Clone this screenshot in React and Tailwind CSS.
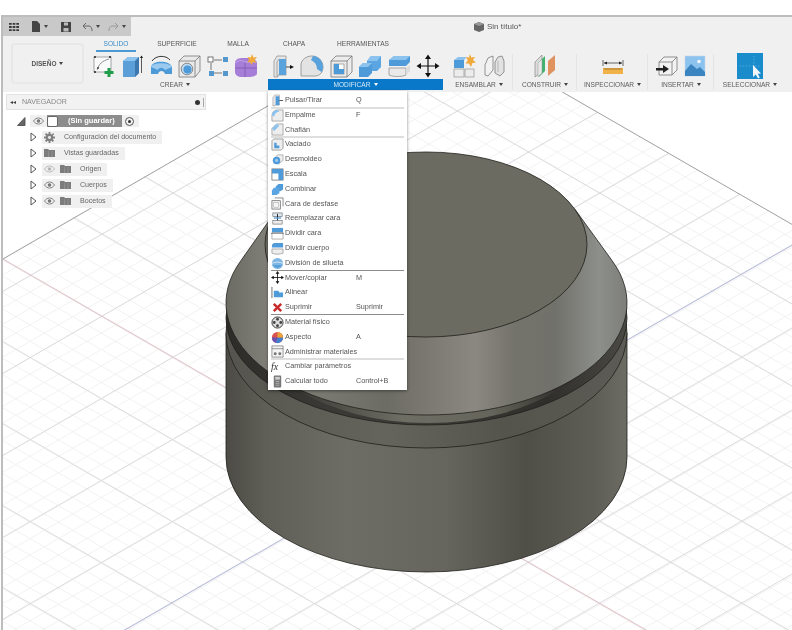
import React from 'react';

const majorC = [11, 93, 175, 340, 422, 504, 586, 668, 750, 832, -71, -153];
const majorD = [293, 375, 457, 539, 621, 785, 867, 949, 1031, 1113];

function gridLines() {
  var minor = [];
  for (var i = -16; i < 70; i++) minor.push(i);
  return minor;
}

// line of slope +0.577 with offset c, across the whole picture
function Up(props) {
  return <line x1={0} y1={props.c} x2={800} y2={props.c + 461.6} stroke={props.stroke} strokeWidth={props.w} />;
}
// line of slope -0.577 with offset d
function Down(props) {
  return <line x1={0} y1={props.d} x2={800} y2={props.d - 461.6} stroke={props.stroke} strokeWidth={props.w} />;
}

function Viewport() {
  return (
    <svg className="absolute inset-0" width="789" height="538" viewBox="3 92 789 538">
      <defs>
        <clipPath id="plane">
          <polygon points="427,14 1000,345 1000,800 -100,800 -100,317" />
        </clipPath>
        <linearGradient id="cyl" gradientUnits="userSpaceOnUse" x1="226" x2="627" y1="0" y2="0">
          <stop offset="0" stopColor="#4c4b45" />
          <stop offset="0.1" stopColor="#5f5e57" />
          <stop offset="0.3" stopColor="#6d6d65" />
          <stop offset="0.55" stopColor="#65645d" />
          <stop offset="0.75" stopColor="#4f4e47" />
          <stop offset="0.92" stopColor="#5e5d56" />
          <stop offset="1" stopColor="#6c6b64" />
        </linearGradient>
        <linearGradient id="cone" gradientUnits="userSpaceOnUse" x1="226" x2="627" y1="0" y2="0">
          <stop offset="0" stopColor="#6c6b63" />
          <stop offset="0.12" stopColor="#84837b" />
          <stop offset="0.4" stopColor="#6d6c64" />
          <stop offset="0.62" stopColor="#8a8880" />
          <stop offset="0.72" stopColor="#74736b" />
          <stop offset="0.82" stopColor="#71716b" />
          <stop offset="0.93" stopColor="#8d8f8a" />
          <stop offset="1" stopColor="#7d7e79" />
        </linearGradient>
        <linearGradient id="groove" gradientUnits="userSpaceOnUse" x1="226" x2="627" y1="0" y2="0">
          <stop offset="0" stopColor="#2d2c29" />
          <stop offset="0.25" stopColor="#3a3935" />
          <stop offset="0.5" stopColor="#3d3c37" />
          <stop offset="0.8" stopColor="#2f2e2a" />
          <stop offset="1" stopColor="#4a4944" />
        </linearGradient>
        <linearGradient id="neck" gradientUnits="userSpaceOnUse" x1="300" x2="556" y1="0" y2="0">
          <stop offset="0" stopColor="#3b3a35" />
          <stop offset="0.4" stopColor="#6f6e65" />
          <stop offset="0.75" stopColor="#66655b" />
          <stop offset="1" stopColor="#33322e" />
        </linearGradient>
        <linearGradient id="ledge" gradientUnits="userSpaceOnUse" x1="226" x2="627" y1="0" y2="0">
          <stop offset="0" stopColor="#55544e" />
          <stop offset="0.4" stopColor="#65645c" />
          <stop offset="0.7" stopColor="#54534c" />
          <stop offset="1" stopColor="#5c5b55" />
        </linearGradient>
      </defs>

      <g clipPath="url(#plane)">
        {gridLines().map(function (i) {
          return <Up key={'u' + i} c={-235 + i * 16.44} stroke="#efefef" w={0.8} />;
        })}
        {gridLines().map(function (i) {
          return <Down key={'d' + i} d={260 + i * 16.44} stroke="#efefef" w={0.8} />;
        })}
        {majorC.map(function (c) {
          return <Up key={c} c={c} stroke="#dddbde" w={1} />;
        })}
        {majorD.map(function (d) {
          return <Down key={d} d={d} stroke="#dddbde" w={1} />;
        })}
        <Up c={257.3} stroke="#e0c6ca" w={1.1} />
        <Down d={702} stroke="#b9bdd9" w={1.1} />
      </g>
      <line x1="3" y1="259" x2="427" y2="14" stroke="#a0a0a0" strokeWidth="1" />
      <line x1="427" y1="14" x2="800" y2="229" stroke="#a0a0a0" strokeWidth="1" />

      {/* cylinder */}
      <path d="M226 333 L226 457 A200.5 115 0 0 0 627 457 L627 333 Z" fill="url(#cyl)" stroke="#1f1f1c" strokeWidth="0.8" />
      <ellipse cx="426.5" cy="333" rx="200.5" ry="115" fill="url(#ledge)" stroke="#1f1f1c" strokeWidth="0.8" />
      <ellipse cx="426.5" cy="318" rx="200.5" ry="107" fill="url(#groove)" stroke="#1f1f1c" strokeWidth="0.8" />
      <ellipse cx="428" cy="300" rx="192" ry="123" fill="url(#neck)" />

      {/* cone and top */}
      <path d="M241 260.500 L277 209.400 L575 209.400 L612 260.500 A200.500 112 0 1 1 241 260.500 Z" fill="url(#cone)" stroke="#1f1f1c" strokeWidth="0.8" />
      <ellipse cx="426" cy="244.500" rx="161" ry="92.500" fill="#6c6b61" stroke="#1f1f1c" strokeWidth="0.8" />
    </svg>
  );
}

function Ico(props) {
  return (
    <svg width={props.w || 24} height={props.h || 24} viewBox={props.box || '0 0 24 24'} className="shrink-0">
      {props.children}
    </svg>
  );
}

const toolIcons = {
  sketch: (
    <Ico>
      <rect x="2" y="3" width="17" height="15" fill="#fafafa" stroke="#8a8f94" strokeWidth="0.8" />
      <path d="M5 16 C7 10 10 7 17 5" fill="none" stroke="#777" strokeWidth="0.8" />
      <path d="M2 3h2M17 3h2M2 18h2" stroke="#222" strokeWidth="1.4" />
      <circle cx="6" cy="14" r="0.9" fill="#333" />
      <path d="M17 14v9M12.500 18.500h9" stroke="#1f9d4a" strokeWidth="3" />
    </Ico>
  ),
  box: (
    <Ico>
      <path d="M3 7 L8 3 H19 V19 L15 23 H3 Z" fill="#5aa5e2" />
      <path d="M3 7 L8 3 H19 L15 7 Z" fill="#8cc2ee" />
      <path d="M15 7 H3 V23 H15 Z" fill="#5c9fd8" />
      <path d="M15 7 L19 3 V19 L15 23 Z" fill="#3c77ad" />
      <path d="M21.5 3 V19" stroke="#333" strokeWidth="0.8" />
      <path d="M20 4 L21.5 1.5 L23 4 Z" fill="#111" />
    </Ico>
  ),
  sweep: (
    <Ico>
      <path d="M2 13 C3 6 21 6 23 13 L23 20 H16 C15 16 10 16 9 20 L2 20 Z" fill="#4d9ad9" />
      <path d="M2 13 C3 8 21 8 23 13 L16 16 C14 13 10 13 9 16 Z" fill="#9cc9ee" />
      <path d="M3 7 C7 1 17 1 21 6" fill="none" stroke="#222" strokeWidth="0.9" />
    </Ico>
  ),
  hole: (
    <Ico>
      <path d="M2 7 L7 2 H23 V17 L18 23 H2 Z" fill="#e9e9e9" stroke="#777" strokeWidth="0.8" />
      <path d="M2 7 H18 V23 M18 7 L23 2" fill="none" stroke="#777" strokeWidth="0.8" />
      <circle cx="10" cy="15" r="5.8" fill="#bcd8ee" stroke="#777" strokeWidth="0.8" />
      <circle cx="10.5" cy="15.5" r="4" fill="#4d9ad9" />
    </Ico>
  ),
  pattern: (
    <Ico>
      <path d="M8 6 H16 M5 9 V16 M8 19 H16" stroke="#555" strokeWidth="0.8" />
      <rect x="2" y="3" width="5" height="5" fill="#fff" stroke="#555" strokeWidth="0.8" />
      <rect x="17" y="3" width="5" height="5" fill="#5497cc" />
      <rect x="3" y="17" width="5" height="5" fill="#5497cc" />
      <rect x="17" y="17" width="5" height="5" fill="#5497cc" />
    </Ico>
  ),
  purple: (
    <Ico>
      <path d="M1 9 C1 5 5 4 9 4 H17 C20 4 23 7 23 9 V19 C23 22 18 23 15 23 H8 C4 23 1 21 1 18 Z" fill="#a67ed8" />
      <path d="M11 8 V23 M1 14 H23" stroke="#7d55b5" strokeWidth="0.8" />
      <path d="M1 9 C5 6 8 6 11 8 L23 8" fill="none" stroke="#c4a4e8" strokeWidth="1" />
      <path d="M18 0 L19.3 3.5 L23 3 L20.6 6 L22.5 9 L19 8 L17.5 11 L16 8 L13 8.5 L15 6 L13.5 3 L16.8 3.5 Z" fill="#f0a93a" />
    </Ico>
  ),
  press: (
    <Ico>
      <path d="M3 7 L6 2 H15 V21 H7 V23 H3 Z" fill="#e5e5e5" stroke="#8a8a8a" strokeWidth="0.7" />
      <path d="M8 5 H15 V21 H8 Z" fill="#5aa2dc" />
      <path d="M8 5 L6 8 V22" fill="none" stroke="#8a8a8a" strokeWidth="0.7" />
      <path d="M15 13 H20" stroke="#333" strokeWidth="0.9" />
      <path d="M19 11 L23 13 L19 15 Z" fill="#111" />
    </Ico>
  ),
  fillet: (
    <Ico>
      <path d="M1 22 V11 C1 6 6 2 12 2 C18 2 23 7 23 13 C23 18 20 22 15 22 Z" fill="#e3e3e3" stroke="#8a8a8a" strokeWidth="0.8" />
      <path d="M13 2 C19 2 23 7 23 13 C23 15 22.500 17 21.500 18 L17 15 C17 11 15 8 11 6 Z" fill="#5aa2dc" />
    </Ico>
  ),
  shell: (
    <Ico>
      <path d="M2 7 L7 2 H23 V18 L18 23 H2 Z" fill="#ececec" stroke="#777" strokeWidth="0.8" />
      <path d="M2 7 H18 V23 M18 7 L23 2" fill="none" stroke="#777" strokeWidth="0.8" />
      <rect x="5" y="10" width="10" height="10" fill="#fff" stroke="#777" strokeWidth="0.6" />
      <path d="M5 10 H10 V15 H15 V20 H5 Z" fill="#4d9ad9" />
    </Ico>
  ),
  combine: (
    <Ico>
      <path d="M9 7 L13 2 H23 V13 L19 17 H9 Z" fill="#5aa5e2" />
      <path d="M9 7 L13 2 H23 L19 7 Z" fill="#8cc2ee" />
      <path d="M1 13 L5 9 H14 V19 L10 23 H1 Z" fill="#4f9ad8" />
      <path d="M1 13 L5 9 H14 L10 13 Z" fill="#8cc2ee" />
    </Ico>
  ),
  split: (
    <Ico>
      <path d="M2 14 H19 V21 C15 23 6 23 2 21 Z" fill="#e9e9e9" stroke="#888" strokeWidth="0.7" />
      <path d="M2 6 L7 2 H23 V8 L19 12 H2 Z" fill="#4f9ad8" />
      <path d="M2 6 L7 2 H23 L19 6 Z" fill="#8cc2ee" />
      <path d="M19 14 L23 11 V17 L19 21 Z" fill="#dcdcdc" />
    </Ico>
  ),
  move: (
    <Ico>
      <path d="M12 4 V20 M4 12 H20" stroke="#111" strokeWidth="1.2" />
      <path d="M12 0.5 L15 5 H9 Z M12 23.5 L15 19 H9 Z M0.5 12 L5 9 V15 Z M23.5 12 L19 9 V15 Z" fill="#111" />
    </Ico>
  ),
  assemble: (
    <Ico>
      <rect x="1" y="6" width="10" height="8" fill="#4f9ad8" />
      <path d="M1 6 L5 3 H14 L11 6 Z" fill="#8cc2ee" />
      <rect x="1" y="15" width="10" height="8" fill="#ececec" stroke="#888" strokeWidth="0.6" />
      <rect x="12" y="15" width="9" height="8" fill="#ececec" stroke="#888" strokeWidth="0.6" />
      <path d="M17 0 L18.3 3.5 L22 3 L20 6 L23 8.5 L19.5 9 L18 13 L16 9.5 L12.5 9.5 L14.8 6.5 L13 3 L16 3.5 Z" fill="#f0a93a" />
    </Ico>
  ),
  joint: (
    <Ico>
      <path d="M3 21 V11 L6 4 L11 2 V16 L6 22 Z" fill="#f2f2f2" stroke="#888" strokeWidth="0.9" />
      <path d="M13 19 V8 L16 3 L20 2 L22 7 V18 L18 22 Z" fill="#e2e2e2" stroke="#888" strokeWidth="0.9" />
      <path d="M16 7 V18" stroke="#aaa" strokeWidth="0.8" />
    </Ico>
  ),
  construct: (
    <Ico>
      <path d="M2 8 L9 1 V17 L2 23 Z" fill="#dcdcdc" stroke="#888" strokeWidth="0.7" />
      <path d="M6 8 L12 2 V17 L6 23 Z" fill="#3fb36b" />
      <path d="M5 9 L9 5 V19 L5 23 Z" fill="#e8e8e8" stroke="#999" strokeWidth="0.5" />
      <path d="M15 7 L22 1 V16 L15 22 Z" fill="#e0935f" />
    </Ico>
  ),
  inspect: (
    <Ico>
      <path d="M2 6 V12 M22 6 V12 M3 9 H21" stroke="#555" strokeWidth="0.9" />
      <path d="M3 9 L6 7.5 V10.5 Z M21 9 L18 7.5 V10.5 Z" fill="#222" />
      <rect x="2" y="14" width="20" height="6" fill="#f1b24a" />
      <path d="M4 14v2M6 14v2M8 14v2M10 14v2M12 14v2M14 14v2M16 14v2M18 14v2M20 14v2" stroke="#7a5a20" strokeWidth="0.6" />
    </Ico>
  ),
  insert: (
    <Ico>
      <path d="M4 8 L9 3 H22 V16 L17 21 H4 Z" fill="#f2f2f2" stroke="#777" strokeWidth="0.8" />
      <path d="M4 8 H17 V21 M17 8 L22 3" fill="none" stroke="#777" strokeWidth="0.8" />
      <path d="M1 14 H8 V11 L14 15 L8 19 V16.5 H1 Z" fill="#222" />
    </Ico>
  ),
  image: (
    <Ico>
      <rect x="2" y="2" width="20" height="20" fill="#8cc2ee" stroke="#c8d8e4" strokeWidth="0.6" />
      <circle cx="16" cy="7.5" r="1.8" fill="#f4f8fb" />
      <path d="M2 22 V17 L8 10 L14 15 L17 13 L22 18 V22 Z" fill="#3a84c0" />
    </Ico>
  ),
  select: (
    <svg width="26" height="26" viewBox="0 0 26 26" className="shrink-0">
      <rect width="26" height="26" fill="#1a8ccc" />
      <path d="M3 13 H23 M17 3 V23" stroke="#6dbde8" strokeWidth="0.6" strokeDasharray="1.5 1.5" />
      <path d="M16 12 V24 L18.8 21.5 L21 25.5 L22.8 24.6 L20.8 20.8 L24 20.4 Z" fill="#f2f6fa" />
    </svg>
  ),
};

const groups = [
  { label: 'ENSAMBLAR', w: 'w-[70px] pl-[2px]', icons: ['assemble', 'joint'], iw: 'w-[29px]', line: true },
  { label: 'CONSTRUIR', w: 'w-[64px]', icons: ['construct'], iw: 'w-[30px]', line: true },
  { label: 'INSPECCIONAR', w: 'w-[71px]', icons: ['inspect'], iw: 'w-[30px]', line: true },
  { label: 'INSERTAR', w: 'w-[66px]', icons: ['insert', 'image'], iw: 'w-[28px]', line: true },
  { label: 'SELECCIONAR', w: 'w-[75px] pr-[3px]', icons: ['select'], iw: 'w-[30px]', line: false },
];

function Caret(props) {
  return <span className={'ml-[3px] inline-block border-x-[2px] border-t-[3px] border-x-transparent align-middle ' + (props.white ? 'border-t-white' : 'border-t-[#444]')} />;
}

function Grp(props) {
  return (
    <div className={'flex flex-col ' + props.className}>
      <div className="flex h-[27px] items-center justify-center">
        {props.icons.map(function (name) {
          return (
            <div key={name} className={'flex justify-center ' + props.iw}>
              {toolIcons[name]}
            </div>
          );
        })}
      </div>
      <div className={'flex h-[11px] items-center justify-center text-[6.6px] ' + (props.active ? 'bg-[#0a78c8] text-[#d5e8f6]' : 'text-[#5a5a5a]')}>
        {props.label}
        <Caret white={props.active} />
      </div>
    </div>
  );
}

function Toolbar() {
  return (
    <div className="h-[75px] bg-[#f0f0f0]">
      <div className="flex h-[19px]">
        <div className="flex w-[128px] items-center bg-[#c9c9c9] pl-[6px]">
          <svg width="10" height="10" viewBox="0 0 11 11" className="shrink-0">
            <path d="M0 1h3v2H0zM4 1h3v2H4zM8 1h3v2H8zM0 4.500h3v2H0zM4 4.500h3v2H4zM8 4.500h3v2H8zM0 8h3v2H0zM4 8h3v2H4zM8 8h3v2H8z" fill="#3a3a3a" />
          </svg>
          <svg width="10" height="11" viewBox="0 0 10 11" className="ml-[12px] shrink-0">
            <path d="M1 0h5l3 3v8H1z" fill="#444" />
          </svg>
          <Caret />
          <svg width="10" height="10" viewBox="0 0 10 10" className="ml-[13px] shrink-0">
            <path d="M0 0h10v10H0z" fill="#444" />
            <path d="M3 0.500h4v3H3zM2.500 6h5v3.500h-5z" fill="#bbb" />
          </svg>
          <svg width="11" height="10" viewBox="0 0 11 10" className="ml-[11px] shrink-0">
            <path d="M4 1 L1 4 L4 7 M1 4 H7 C9 4 10 6 10 9" fill="none" stroke="#666" strokeWidth="1" />
          </svg>
          <Caret />
          <svg width="11" height="10" viewBox="0 0 11 10" className="ml-[8px] shrink-0">
            <path d="M7 1 L10 4 L7 7 M10 4 H4 C2 4 1 6 1 9" fill="none" stroke="#9a9a9a" strokeWidth="1" />
          </svg>
          <Caret />
        </div>
        <div className="flex flex-1 items-center pl-[343px] text-[8px] text-[#555]">
          <svg width="10" height="10" viewBox="0 0 10 10" className="mr-[3px] shrink-0">
            <path d="M0 2 L5 0 L10 2 L10 8 L5 10 L0 8 Z" fill="#666" />
            <path d="M0 2 L5 4 L10 2 L5 0 Z" fill="#999" />
          </svg>
          Sin título*
        </div>
      </div>
      <div className="flex pl-[8px]">
        <div className="mt-[7px] flex h-[41px] w-[73px] items-center justify-center rounded-[4px] border-2 border-[#e8e8e8] text-[6.5px] font-bold text-[#555]">
          DISEÑO
          <Caret />
        </div>
        <div className="ml-[5px] flex flex-col">
          <div className="flex h-[16px] items-center pl-[7px] text-center text-[6.6px] text-[#555]">
            <div className="h-[16px] w-[40px] border-b-2 border-[#4a9ad4] pt-[3px] text-[#3a8cc8]">SOLIDO</div>
            <div className="w-[82px]">SUPERFICIE</div>
            <div className="w-[40px]">MALLA</div>
            <div className="w-[72px]">CHAPA</div>
            <div className="w-[66px]">HERRAMIENTAS</div>
          </div>
          <div className="flex">
            <Grp label="CREAR" className="w-[172px]" iw="w-[28.6px]" icons={['sketch', 'box', 'sweep', 'hole', 'pattern', 'purple']} />
            <Grp label="MODIFICAR" active className="ml-[7px] w-[175px]" iw="w-[29.2px]" icons={['press', 'fillet', 'shell', 'combine', 'split', 'move']} />
            {groups.map(function (g) {
              return (
                <div key={g.label} className={'relative ' + g.w}>
                  <Grp label={g.label} icons={g.icons} iw={g.iw} />
                  {g.line && <div className="absolute right-0 top-[2px] h-[36px] w-px bg-[#e4e4e4]" />}
                </div>
              );
            })}
          </div>
        </div>
      </div>
    </div>
  );
}

function Arrow() {
  return (
    <svg width="7" height="10" viewBox="0 0 7 10" className="shrink-0">
      <path d="M1 1 L6 5 L1 9 Z" fill="#fff" stroke="#444" strokeWidth="0.9" />
    </svg>
  );
}

function Eye(props) {
  var c = props.dim ? '#b5b5b5' : '#777';
  return (
    <svg width="11" height="8" viewBox="0 0 11 8" className="shrink-0">
      <path d="M0.500 4 C3 0 8 0 10.500 4 C8 8 3 8 0.500 4 Z" fill="none" stroke={c} strokeWidth="0.9" />
      <circle cx="5.500" cy="4" r="1.800" fill={c} />
    </svg>
  );
}

function Folder() {
  return (
    <svg width="11" height="8" viewBox="0 0 11 8" className="shrink-0">
      <path d="M0 0h4l1 1h6v7H0z" fill="#7c7c7c" />
      <path d="M4.500 2v6M8 2v6" stroke="#a5a5a5" strokeWidth="0.5" />
    </svg>
  );
}

function Gear() {
  return (
    <svg width="11" height="11" viewBox="0 0 12 12" className="shrink-0">
      <path d="M5 0h2v2l1.500.6L10 1.200 11 2.500 9.600 4 10 5h2v2h-2l-.4 1L11 9.500 9.500 11 8 9.600 7 10v2H5v-2l-1-.4L2.500 11 1 9.500 2.400 8 2 7H0V5h2l.4-1L1 2.500 2.500 1 4 2.400 5 2z" fill="#808080" />
      <circle cx="6" cy="6" r="1.600" fill="#f0f0f0" />
    </svg>
  );
}

function Navigator() {
  return (
    <div className="absolute left-[3px] top-[2px] w-[200px] text-[7.1px] text-[#666]">
      <div className="flex h-[16px] items-center border border-[#e2e2e2] bg-[#f2f2f2] pl-[3px]">
        <span className="text-[6px] leading-none text-[#444]">◂◂</span>
        <span className="ml-[6px] flex-1 text-[#888]">NAVEGADOR</span>
        <span className="mr-[3px] h-[5px] w-[5px] rounded-full bg-[#333]" />
        <span className="mr-[1px] h-[9px] w-px bg-[#aaa]" />
      </div>
      <div className="ml-[11px] mt-[3px] flex h-[16px] items-center">
        <svg width="9" height="9" viewBox="0 0 9 9" className="shrink-0">
          <path d="M8 0.500 V8.500 H0.500 Z" fill="#666" stroke="#444" strokeWidth="0.8" />
        </svg>
        <div className="ml-[4px] flex h-[12px] items-center bg-[#f0f0f0] pl-[3px] pr-[5px]">
          <Eye />
          <div className="ml-[3px] flex h-[12px] w-[75px] items-center bg-[#8d8d8d] text-[7.5px] font-bold text-white">
            <span className="h-[11px] w-[11px] rounded-[2px] border border-[#666] bg-white" />
            <span className="ml-[10px]">(Sin guardar)</span>
          </div>
          <span className="ml-[3px] flex h-[9px] w-[9px] items-center justify-center rounded-full border border-[#555]">
            <span className="h-[3px] w-[3px] rounded-full bg-[#333]" />
          </span>
        </div>
      </div>
      {[
        { t: 'Configuración del documento', gear: true },
        { t: 'Vistas guardadas' },
        { t: 'Origen', eye: true, dim: true },
        { t: 'Cuerpos', eye: true },
        { t: 'Bocetos', eye: true },
      ].map(function (r) {
        return (
          <div key={r.t} className="ml-[24px] flex h-[16px] items-center">
            <Arrow />
            <div className="ml-[5px] flex h-[13px] items-center bg-[#f0f0f0] pl-[2px] pr-[6px]">
              {r.eye && <div className="mr-[5px]"><Eye dim={r.dim} /></div>}
              {r.gear ? <Gear /> : <Folder />}
              <span className="ml-[9px]">{r.t}</span>
            </div>
          </div>
        );
      })}
    </div>
  );
}

function M(props) {
  return (
    <svg width="13" height="13" viewBox="0 0 14 14" className="shrink-0">
      {props.children}
    </svg>
  );
}

const blue = '#4f9ad8';
const menu = [
  { t: 'Pulsar/Tirar', k: 'Q', sep: 'light', i: <M><path d="M2 4 L4 1 H9 V12 H4 V13 H2 Z" fill="#e5e5e5" stroke="#888" strokeWidth="0.5" /><path d="M5 2.500 H9 V12 H5 Z" fill={blue} /><path d="M9 7 H13" stroke="#222" strokeWidth="0.8" /></M> },
  { t: 'Empalme', k: 'F', i: <M><path d="M1 13 V7 C1 3 4 1 7 1 H13 V13 Z" fill="#eee" stroke="#888" strokeWidth="0.7" /><path d="M1 7 C1 3 4 1 7 1 L9 3 C6 3 4 5 3.500 8 Z" fill="#8cc2ee" /></M> },
  { t: 'Chaflán', sep: 'light', i: <M><path d="M1 13 V6 L6 1 H13 V13 Z" fill="#eee" stroke="#888" strokeWidth="0.7" /><path d="M1 6 L6 1 L9 3 L3.500 8.500 Z" fill="#8cc2ee" /></M> },
  { t: 'Vaciado', i: <M><path d="M1 3 L3 1 H13 V11 L11 13 H1 Z" fill="#eee" stroke="#777" strokeWidth="0.7" /><path d="M3.500 5 H6 V8 H9 V11 H3.500 Z" fill={blue} /></M> },
  { t: 'Desmoldeo', i: <M><path d="M2 8 L7 2 H13 V8 L8 12 Z" fill="#eee" stroke="#888" strokeWidth="0.6" /><circle cx="6" cy="8" r="4" fill={blue} /><circle cx="6" cy="8" r="1.800" fill="#9cc9ee" /></M> },
  { t: 'Escala', i: <M><rect x="1" y="1" width="12" height="12" fill="#fff" stroke="#555" strokeWidth="0.7" /><path d="M1 1 H13 V13 H8 V6 H1 Z" fill={blue} /></M> },
  { t: 'Combinar', i: <M><path d="M5 4 L8 1 H13 V7 L10 9 H5 Z" fill={blue} /><path d="M1 8 L3 5 H9 V11 L6 13 H1 Z" fill="#5aa5e2" /></M> },
  { t: 'Cara de desfase', i: <M><rect x="1" y="4" width="9" height="9" fill="#f4f4f4" stroke="#555" strokeWidth="0.7" /><path d="M4 1 H13 V10" fill="none" stroke="#555" strokeWidth="0.7" /><rect x="3" y="6" width="5" height="5" fill="none" stroke="#999" strokeWidth="0.5" /></M> },
  { t: 'Reemplazar cara', i: <M><rect x="2" y="1" width="10" height="4" fill="#dfe7ee" stroke="#555" strokeWidth="0.6" /><rect x="2" y="9" width="10" height="4" fill="#eee" stroke="#555" strokeWidth="0.6" /><path d="M7 2 V9" stroke="#222" strokeWidth="1" /><path d="M3 6.500 H11" stroke={blue} strokeWidth="1.400" /></M> },
  { t: 'Dividir cara', i: <M><path d="M1 1 H13 V6 H1 Z" fill={blue} /><path d="M1 6 H13 V13 H1 Z" fill="#fff" stroke="#777" strokeWidth="0.6" /><path d="M0 7 H14" stroke="#555" strokeWidth="0.6" /></M> },
  { t: 'Dividir cuerpo', i: <M><path d="M1 3 L3 1 H13 V6 H1 Z" fill={blue} /><path d="M1 7.500 H13 V12 C10 13.500 4 13.500 1 12 Z" fill="#eee" stroke="#777" strokeWidth="0.6" /></M> },
  { t: 'División de silueta', sep: 'dark', i: <M><circle cx="7" cy="7" r="6" fill="#7fb6e4" /><path d="M1 7 C4 5 10 5 13 7" fill="none" stroke="#fff" strokeWidth="0.7" /><path d="M2 9 C5 12 9 12 12 9" fill={blue} /></M> },
  { t: 'Mover/copiar', k: 'M', i: <M><path d="M7 2 V12 M2 7 H12" stroke="#111" strokeWidth="0.9" /><path d="M7 0 L9 3 H5 Z M7 14 L9 11 H5 Z M0 7 L3 5 V9 Z M14 7 L11 5 V9 Z" fill="#111" /></M> },
  { t: 'Alinear', i: <M><path d="M1 1 V13" stroke="#555" strokeWidth="0.9" /><path d="M3 5 H8 L9 7 H13 V12 H3 Z" fill={blue} /></M> },
  { t: 'Suprimir', k: 'Suprimir', sep: 'dark', i: <M><path d="M3 3 L11 11 M11 3 L3 11" stroke="#c92a2a" strokeWidth="2.600" /></M> },
  { t: 'Material físico', i: <M><circle cx="7" cy="7" r="6" fill="#ddd" stroke="#333" strokeWidth="1" /><circle cx="7" cy="3.500" r="1.500" fill="#444" /><circle cx="7" cy="10.500" r="1.500" fill="#444" /><circle cx="3.500" cy="7" r="1.500" fill="#444" /><circle cx="10.500" cy="7" r="1.500" fill="#444" /></M> },
  { t: 'Aspecto', k: 'A', i: <M><circle cx="7" cy="7" r="6" fill="#d9534f" /><path d="M7 7 L13 7 A6 6 0 0 1 5 12.700 Z" fill="#3f7fd0" /><path d="M7 7 L5 12.700 A6 6 0 0 1 1 7 Z" fill="#6a4fb5" /><path d="M7 7 V1 A6 6 0 0 1 13 7 Z" fill="#e8a33a" /></M> },
  { t: 'Administrar materiales', sep: 'light', i: <M><rect x="1" y="1" width="12" height="12" fill="#f5f5f5" stroke="#666" strokeWidth="0.7" /><path d="M1 4 H13" stroke="#666" strokeWidth="0.7" /><circle cx="4.500" cy="9.500" r="1.600" fill="#777" /><circle cx="9.500" cy="9.500" r="1.600" fill="#777" /></M> },
  { t: 'Cambiar parámetros', i: <span className="w-[13px] shrink-0 font-['Liberation_Serif',serif] text-[10px] italic leading-none text-[#333]">fx</span> },
  { t: 'Calcular todo', k: 'Control+B', i: <M><rect x="3" y="0.500" width="8" height="13" rx="1" fill="#777" /><rect x="4.500" y="2" width="5" height="3" fill="#ccc" /><path d="M5 7h4M5 9h4M5 11h4" stroke="#bbb" strokeWidth="0.8" /></M> },
];

function Menu() {
  return (
    <div className="absolute left-[265px] top-[-1px] w-[139px] bg-white pb-[1px] pt-[2px] text-[7.25px] text-[#555] shadow-[0_1px_3px_rgba(0,0,0,0.45)]">
      {menu.map(function (m) {
        return (
          <div key={m.t} className="relative mx-[3px] flex h-[14.8px] items-center">
            {m.i}
            <span className="ml-px w-[71px] whitespace-nowrap">{m.t}</span>
            <span>{m.k}</span>
            {m.sep === 'light' && <div className="absolute inset-x-0 bottom-[-1px] h-[2px] bg-[#dedede]" />}
            {m.sep === 'dark' && <div className="absolute inset-x-0 bottom-[-0.5px] h-px bg-[#8c8c8c]" />}
          </div>
        );
      })}
    </div>
  );
}

export default function App() {
  return (
    <div className="h-[630px] w-[792px] overflow-hidden bg-white pl-px pt-[15px] font-['Liberation_Sans',Arial,sans-serif] blur-[0.3px]">
      <div className="flex h-[615px] flex-col border-l-2 border-t-2 border-[#bdbdbd]">
        <Toolbar />
        <div className="relative flex-1">
          <Viewport />
          <Navigator />
          <Menu />
        </div>
      </div>
    </div>
  );
}
